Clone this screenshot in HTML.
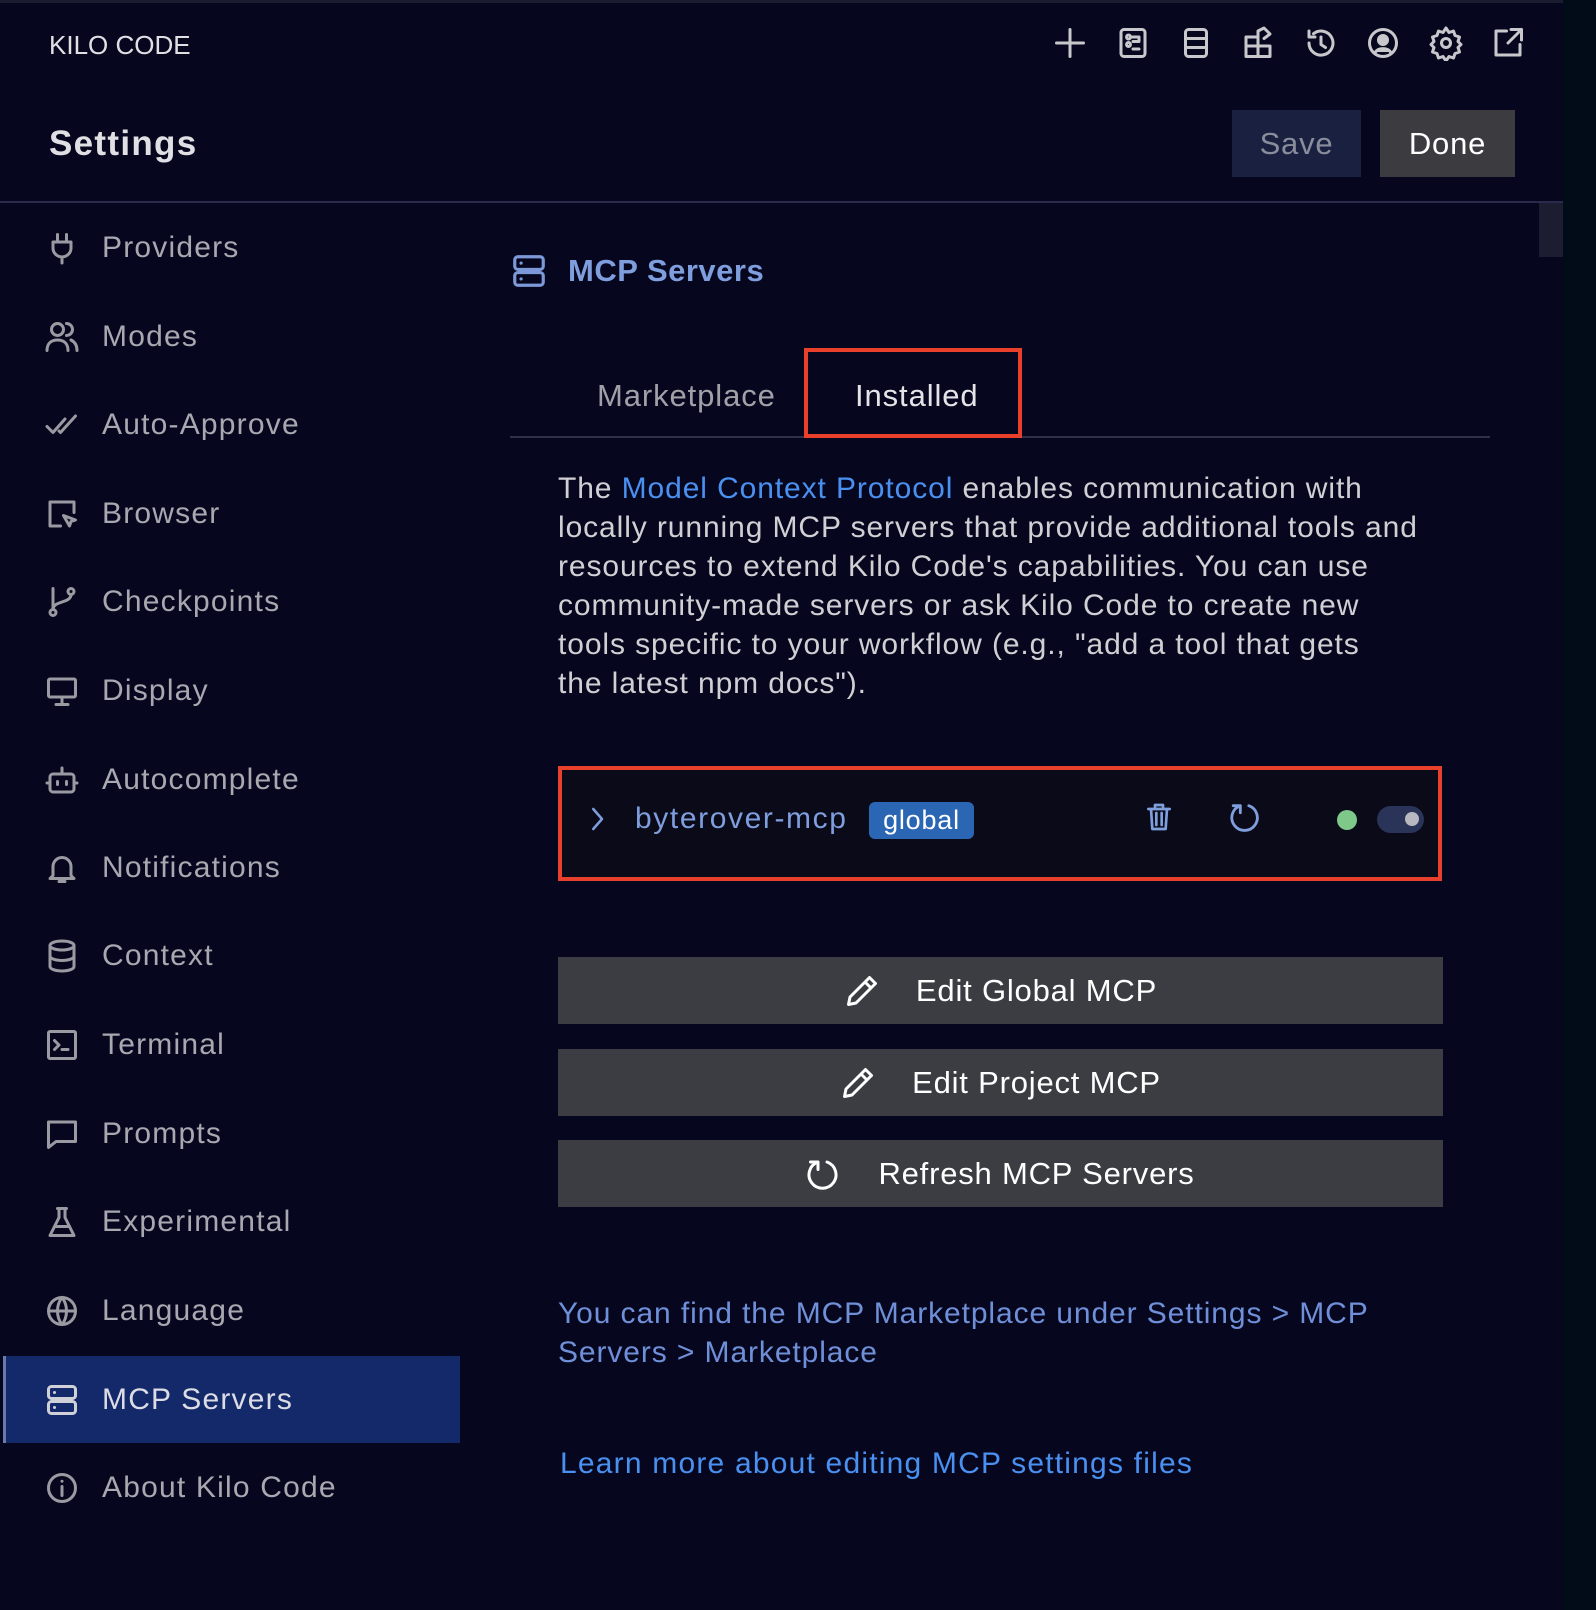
<!DOCTYPE html>
<html><head><meta charset="utf-8"><style>
*{margin:0;padding:0;box-sizing:border-box}
body{width:1596px;height:1610px;background:#06071e;font-family:"Liberation Sans",sans-serif;position:relative;overflow:hidden;color:#c8c8cc}
.a{position:absolute}
.top{left:0;top:0;width:1596px;height:3px;background:#1a1d30}
.strip{left:1563px;top:0;width:33px;height:1610px;background:#020b18}
svg{fill:none;stroke:currentColor;stroke-width:2;stroke-linecap:round;stroke-linejoin:round}
.nav{left:0;width:460px;height:88px;display:flex;align-items:center;font-size:30px;color:#a8a8b0;letter-spacing:1.2px}
.nav svg{position:absolute;left:44px;width:36px;height:36px;color:#9a9aa2}
.nav span{position:absolute;left:102px}
.btn{left:558px;width:885px;height:67px;background:#3c3d42;color:#fff;font-size:31px;display:flex;align-items:center;justify-content:center;gap:36px;letter-spacing:0.8px}
.btn svg{width:36px;height:36px;color:#fff}
.ti svg{width:36px;height:36px;color:#c8c8cc;position:absolute;top:25px}
</style></head><body>
<div class="a top"></div>
<div class="a strip"></div>
<div class="a" style="left:49px;top:30px;font-size:26px;color:#e0e0e4">KILO CODE</div>
<div class="a ti" style="left:0;top:0;width:1596px;height:80px">
<svg style="left:1052px" viewBox="0 0 24 24"><path d="M12 3v18M3 12h18"/></svg>
<svg style="left:1115px" viewBox="0 0 24 24"><rect x="4" y="3" width="16" height="18" rx="2"/><circle cx="9" cy="8" r="1.3"/><circle cx="9" cy="13" r="1.3"/><path d="M11 8h5v3h-4M12 16h4"/></svg>
<svg style="left:1178px" viewBox="0 0 24 24"><rect x="5" y="3" width="14" height="18" rx="2"/><path d="M5 9h14M5 15h14"/></svg>
<svg style="left:1240px" viewBox="0 0 24 24"><path d="M4 8h8v13H4zM4 14h16v7h-8M12 8V4l4-2 4 4-4 3"/></svg>
<svg style="left:1303px" viewBox="0 0 24 24"><path d="M4 12a8 8 0 1 0 3-6.2M4 4v4h4M12 8v5l3 2"/></svg>
<svg style="left:1365px" viewBox="0 0 24 24"><circle cx="12" cy="12" r="9"/><circle cx="12" cy="10" r="3" fill="currentColor"/><path d="M7 18c2-3 8-3 10 0" fill="currentColor"/></svg>
<svg style="left:1428px" viewBox="0 0 24 24"><circle cx="12" cy="12" r="3"/><path d="M12 2l2 3 3-1 1 3 3 1-1 3 2 2-2 2 1 3-3 1-1 3-3-1-2 3-2-3-3 1-1-3-3-1 1-3-2-2 2-2-1-3 3-1 1-3 3 1z"/></svg>
<svg style="left:1490px" viewBox="0 0 24 24"><path d="M11 4H4v16h16v-7M14 3h7v7M21 3l-9 9"/></svg>
</div>
<div class="a" style="left:49px;top:124px;font-size:35px;font-weight:bold;color:#e0e0e4;letter-spacing:1.3px">Settings</div>
<div class="a" style="left:1232px;top:110px;width:129px;height:67px;background:#1a2040;color:#8a8d9c;font-size:31px;display:flex;align-items:center;justify-content:center;letter-spacing:0.8px">Save</div>
<div class="a" style="left:1380px;top:110px;width:135px;height:67px;background:#3c3c40;color:#fff;font-size:31px;display:flex;align-items:center;justify-content:center;letter-spacing:0.8px">Done</div>
<div class="a" style="left:0;top:201px;width:1563px;height:2px;background:#2a2b4c"></div>
<div class="a" style="left:1539px;top:203px;width:24px;height:54px;background:#1c1d30"></div>

<div class="a nav" style="top:204px"><svg viewBox="0 0 24 24"><path d="M9 3v5M15 3v5M6 8h12v4a6 6 0 0 1-12 0zM12 18v4"/></svg><span>Providers</span></div>
<div class="a nav" style="top:293px"><svg viewBox="0 0 24 24"><circle cx="9" cy="7" r="4"/><path d="M2 21c0-5 3-7 7-7s7 2 7 7M15 3a4 4 0 0 1 0 8M18 14c2 1 4 3 4 7"/></svg><span>Modes</span></div>
<div class="a nav" style="top:381px"><svg viewBox="0 0 24 24"><path d="M2 13l4 4 8-9M10 16l1 1 10-11"/></svg><span>Auto-Approve</span></div>
<div class="a nav" style="top:470px"><svg viewBox="0 0 24 24"><path d="M11 20H4V4h16v7M13 13l8 3-3 1-1 3z"/></svg><span>Browser</span></div>
<div class="a nav" style="top:558px"><svg viewBox="0 0 24 24"><circle cx="6" cy="19" r="2"/><circle cx="18" cy="5" r="2"/><path d="M6 3v14M18 7c0 6-12 4-12 10"/></svg><span>Checkpoints</span></div>
<div class="a nav" style="top:647px"><svg viewBox="0 0 24 24"><rect x="3" y="4" width="18" height="12" rx="1"/><path d="M12 16v4M8 21h8"/></svg><span>Display</span></div>
<div class="a nav" style="top:736px"><svg viewBox="0 0 24 24"><rect x="4" y="8" width="16" height="12" rx="2"/><path d="M12 4v4M9 13v2M15 13v2M2 14h2M20 14h2"/></svg><span>Autocomplete</span></div>
<div class="a nav" style="top:824px"><svg viewBox="0 0 24 24"><path d="M6 17V11a6 6 0 0 1 12 0v6l2 2H4zM10 21h4"/></svg><span>Notifications</span></div>
<div class="a nav" style="top:912px"><svg viewBox="0 0 24 24"><ellipse cx="12" cy="5" rx="8" ry="3"/><path d="M4 5v14c0 1.7 3.6 3 8 3s8-1.3 8-3V5M4 12c0 1.7 3.6 3 8 3s8-1.3 8-3"/></svg><span>Context</span></div>
<div class="a nav" style="top:1001px"><svg viewBox="0 0 24 24"><rect x="3" y="3" width="18" height="18" rx="1"/><path d="M7 9l3 3-3 3M12 15h4"/></svg><span>Terminal</span></div>
<div class="a nav" style="top:1090px"><svg viewBox="0 0 24 24"><path d="M3 4h18v13H8l-5 4z"/></svg><span>Prompts</span></div>
<div class="a nav" style="top:1178px"><svg viewBox="0 0 24 24"><path d="M9 3h6M10 3v6L4 21h16L14 9V3M7 15h10"/></svg><span>Experimental</span></div>
<div class="a nav" style="top:1267px"><svg viewBox="0 0 24 24"><circle cx="12" cy="12" r="9"/><path d="M3 12h18M12 3c-4 5-4 13 0 18M12 3c4 5 4 13 0 18"/></svg><span>Language</span></div>
<div class="a nav" style="top:1356px;height:87px;left:3px;width:457px;background:#13296a;color:#dcdce4;border-left:3px solid #6a7aa8"><svg viewBox="0 0 24 24" style="left:38px;color:#d0d0d8"><rect x="3" y="3" width="18" height="8" rx="2"/><rect x="3" y="13" width="18" height="8" rx="2"/><path d="M7 7h.01M7 17h.01"/></svg><span style="left:96px">MCP Servers</span></div>
<div class="a nav" style="top:1444px"><svg viewBox="0 0 24 24"><circle cx="12" cy="12" r="9"/><path d="M12 11v6M12 7.5h.01"/></svg><span>About Kilo Code</span></div>

<svg class="a" style="left:510px;top:252px;width:38px;height:38px;color:#7d98d8" viewBox="0 0 24 24"><rect x="3" y="3" width="18" height="8" rx="2"/><rect x="3" y="13" width="18" height="8" rx="2"/><path d="M7 7h.01M7 17h.01"/></svg>
<div class="a" style="left:568px;top:253px;font-size:31px;font-weight:bold;color:#7f9ede;letter-spacing:0.5px">MCP Servers</div>

<div class="a" style="left:510px;top:436px;width:980px;height:2px;background:#2e2f48"></div>
<div class="a" style="left:597px;top:378px;font-size:31px;color:#a0a0a8;letter-spacing:0.9px">Marketplace</div>
<div class="a" style="left:804px;top:348px;width:218px;height:90px;border:4px solid #e8402a"></div>
<div class="a" style="left:855px;top:378px;font-size:31px;color:#e4e4e8;letter-spacing:0.9px">Installed</div>

<div class="a" style="left:558px;top:469px;width:960px;font-size:30px;line-height:39px;color:#d0d0d4;letter-spacing:0.9px;white-space:nowrap">The <span style="color:#4a90f0">Model Context Protocol</span> enables communication with<br>locally running MCP servers that provide additional tools and<br>resources to extend Kilo Code's capabilities. You can use<br>community-made servers or ask Kilo Code to create new<br>tools specific to your workflow (e.g., "add a tool that gets<br>the latest npm docs").</div>

<div class="a" style="left:558px;top:766px;width:884px;height:115px;border:4px solid #e8402a;background:#0a0a18"></div>
<svg class="a" style="left:585px;top:804px;width:24px;height:30px;color:#7f9ede" viewBox="0 0 12 24"><path d="M3 4l7 8-7 8"/></svg>
<div class="a" style="left:635px;top:802px;font-size:30px;color:#7f9ede;letter-spacing:1.6px">byterover-mcp</div>
<div class="a" style="left:869px;top:802px;width:105px;height:37px;background:#2a66b4;border-radius:6px;color:#fff;font-size:27px;display:flex;align-items:center;justify-content:center;letter-spacing:0.8px">global</div>
<svg class="a" style="left:1143px;top:800px;width:32px;height:34px;color:#7f9ede" viewBox="0 0 24 24"><path d="M4 6h16M9 6V3h6v3M6 6l1 15h10l1-15M10 9v9M14 9v9"/></svg>
<svg class="a" style="left:1229px;top:799px;width:34px;height:36px;color:#7f9ede" viewBox="0 0 24 24"><path d="M8 4a9 9 0 1 0 6 0M8 4v5M8 4H3"/></svg>
<div class="a" style="left:1337px;top:810px;width:20px;height:20px;border-radius:50%;background:#7ec88a"></div>
<div class="a" style="left:1377px;top:806px;width:47px;height:27px;border-radius:14px;background:#2a3458"></div>
<div class="a" style="left:1405px;top:812px;width:14px;height:14px;border-radius:50%;background:#b8b8c0"></div>

<div class="a btn" style="top:957px"><svg viewBox="0 0 24 24"><path d="M17 3l4 4L8 20l-5 1 1-5zM14 6l4 4"/></svg><span>Edit Global MCP</span></div>
<div class="a btn" style="top:1049px"><svg viewBox="0 0 24 24"><path d="M17 3l4 4L8 20l-5 1 1-5zM14 6l4 4"/></svg><span>Edit Project MCP</span></div>
<div class="a btn" style="top:1140px"><svg viewBox="0 0 24 24"><path d="M8 4a9 9 0 1 0 6 0M8 4v5M8 4H3"/></svg><span>Refresh MCP Servers</span></div>

<div class="a" style="left:558px;top:1294px;width:960px;font-size:30px;line-height:39px;color:#6f8fd8;letter-spacing:0.9px;white-space:nowrap">You can find the MCP Marketplace under Settings &gt; MCP<br>Servers &gt; Marketplace</div>
<div class="a" style="left:560px;top:1447px;font-size:30px;color:#4a90f0;letter-spacing:1.2px">Learn more about editing MCP settings files</div>
</body></html>
